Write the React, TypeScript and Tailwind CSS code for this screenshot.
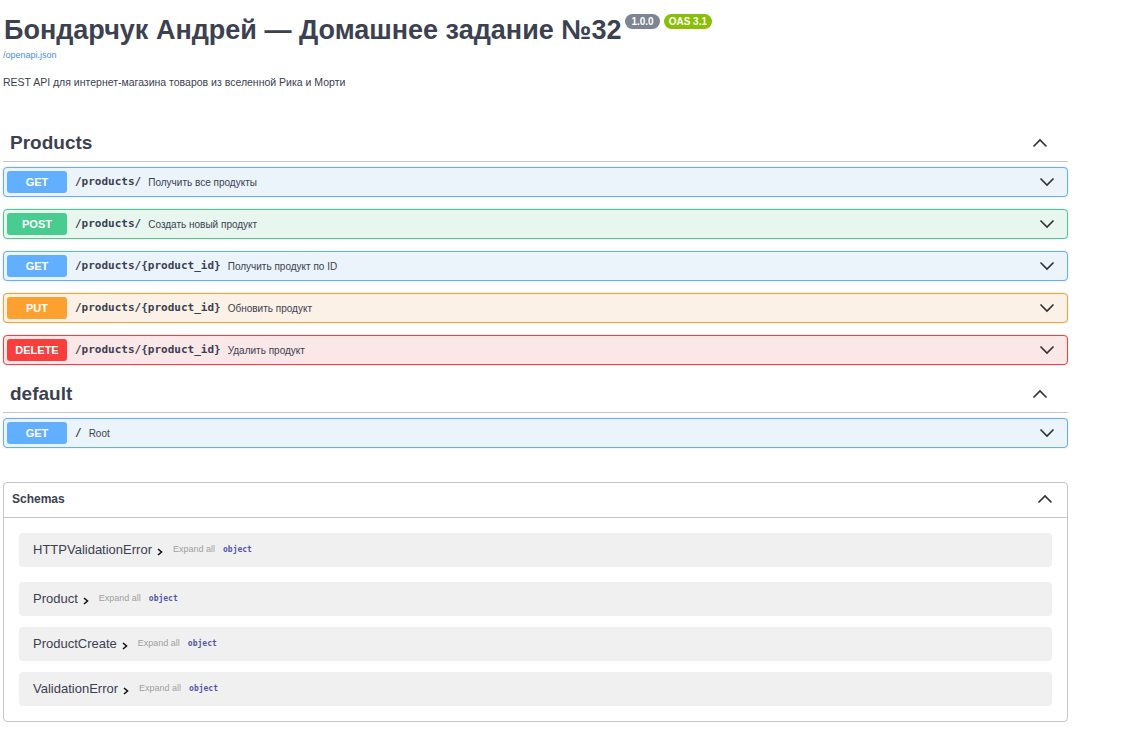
import React from "react";

type Op = {
  method: string;
  path: string;
  summary: string;
};

const methodStyles: Record<string, { row: string; badge: string }> = {
  GET: { row: "bg-[#ebf3fb] border-[#61affe]", badge: "bg-[#61affe]" },
  POST: { row: "bg-[#e8f6f0] border-[#49cc90]", badge: "bg-[#49cc90]" },
  PUT: { row: "bg-[#fbf1e6] border-[#fca130]", badge: "bg-[#fca130]" },
  DELETE: { row: "bg-[#fae7e7] border-[#f93e3e]", badge: "bg-[#f93e3e]" },
};

const productOps: Op[] = [
  { method: "GET", path: "/products/", summary: "Получить все продукты" },
  { method: "POST", path: "/products/", summary: "Создать новый продукт" },
  { method: "GET", path: "/products/{product_id}", summary: "Получить продукт по ID" },
  { method: "PUT", path: "/products/{product_id}", summary: "Обновить продукт" },
  { method: "DELETE", path: "/products/{product_id}", summary: "Удалить продукт" },
];

const defaultOps: Op[] = [{ method: "GET", path: "/", summary: "Root" }];

const schemas = [
  { name: "HTTPValidationError", gap: "mb-[15px]" },
  { name: "Product", gap: "mb-[11px]" },
  { name: "ProductCreate", gap: "mb-[11px]" },
  { name: "ValidationError", gap: "" },
];

function Chevron({ up = false }: { up?: boolean }) {
  return (
    <svg width="16" height="10" viewBox="0 0 16 10" className="shrink-0">
      <path
        d={up ? "M1.5 8.5 L8 2 L14.5 8.5" : "M1.5 1.5 L8 8 L14.5 1.5"}
        fill="none"
        stroke="#303030"
        strokeWidth="1.6"
      />
    </svg>
  );
}

function TagHeader({ title }: { title: string }) {
  return (
    <div className="h-[40px] flex items-center justify-between pl-[7px] pr-[20px] pt-[3px] border-b border-[#c4c6cb] mb-[5px]">
      <h3 className="text-[19px] font-bold text-[#3b4151]">{title}</h3>
      <Chevron up />
    </div>
  );
}

function OpRow({ op }: { op: Op }) {
  const s = methodStyles[op.method];
  return (
    <div
      className={`h-[30px] flex items-center border rounded-[4px] px-[3px] shadow-[0_0_2px_rgba(0,0,0,0.15)] ${s.row}`}
    >
      <span
        className={`w-[60px] h-[22px] rounded-[3px] flex items-center justify-center text-white text-[11px] font-bold ${s.badge}`}
      >
        {op.method}
      </span>
      <span className="ml-[8px] font-['DejaVu_Sans_Mono',monospace] font-bold text-[11px] text-[#3b4151]">
        {op.path}
      </span>
      <span className="ml-[7px] text-[10px] text-[#3b4151]">{op.summary}</span>
      <span className="ml-auto mr-[9px]">
        <Chevron />
      </span>
    </div>
  );
}

export default function App() {
  return (
    <div className="min-h-screen bg-white font-['Liberation_Sans',Arial,sans-serif] text-[#3b4151]">
      <div className="w-[1065px] ml-[3px]">
        {/* Info */}
        <div className="pt-[15px]">
          <div className="flex items-start">
            <h1 className="ml-[1px] text-[27px] leading-[30px] font-bold text-[#3b4151]">
              Бондарчук Андрей — Домашнее задание №32
            </h1>
            <div className="flex gap-[4px] ml-[4px] -mt-[1px]">
              <span className="h-[15px] px-[6px] rounded-full bg-[#7d8492] text-white text-[10px] font-bold leading-[15px]">
                1.0.0
              </span>
              <span className="h-[15px] px-[5px] rounded-full bg-[#89bf04] text-white text-[10px] font-bold leading-[15px]">
                OAS 3.1
              </span>
            </div>
          </div>
          <a className="block mt-[4px] text-[9px] leading-[12px] text-[#4990e2]">/openapi.json</a>
          <p className="mt-[14px] text-[10.5px] leading-[14px]">
            REST API для интернет-магазина товаров из вселенной Рика и Морти
          </p>
        </div>

        {/* Products */}
        <div className="mt-[33px]">
          <TagHeader title="Products" />
          <div className="flex flex-col gap-[12px]">
            {productOps.map((op, i) => (
              <OpRow key={i} op={op} />
            ))}
          </div>
        </div>

        {/* default */}
        <div className="mt-[8px]">
          <TagHeader title="default" />
          <div className="flex flex-col gap-[12px]">
            {defaultOps.map((op, i) => (
              <OpRow key={i} op={op} />
            ))}
          </div>
        </div>

        {/* Schemas */}
        <div className="mt-[34px] border border-[#c4c6cb] rounded-[4px]">
          <div className="h-[35px] flex items-center justify-between pl-[8px] pr-[14px] pb-[3px] border-b border-[#c4c6cb]">
            <span className="text-[12px] font-bold text-[#3b4151]">Schemas</span>
            <Chevron up />
          </div>
          <div className="px-[15px] pt-[15px] pb-[15px]">
            {schemas.map((s) => (
              <div
                key={s.name}
                className={`h-[34px] flex items-center rounded-[4px] bg-[#f0f0f0] pl-[14px] ${s.gap}`}
              >
                <span className="text-[13px] text-[#3b4151]">{s.name}</span>
                <svg width="8" height="8" viewBox="0 0 8 8" className="ml-[4px] mt-[3px]">
                  <path d="M2 1 L5.5 4 L2 7" fill="none" stroke="#111" strokeWidth="1.6" />
                </svg>
                <span className="ml-[9px] text-[9px] text-[#a0a0a0]">Expand all</span>
                <span className="ml-[8px] font-['DejaVu_Sans_Mono',monospace] font-bold text-[8px] text-[#5555aa]">
                  object
                </span>
              </div>
            ))}
          </div>
        </div>
      </div>
    </div>
  );
}
